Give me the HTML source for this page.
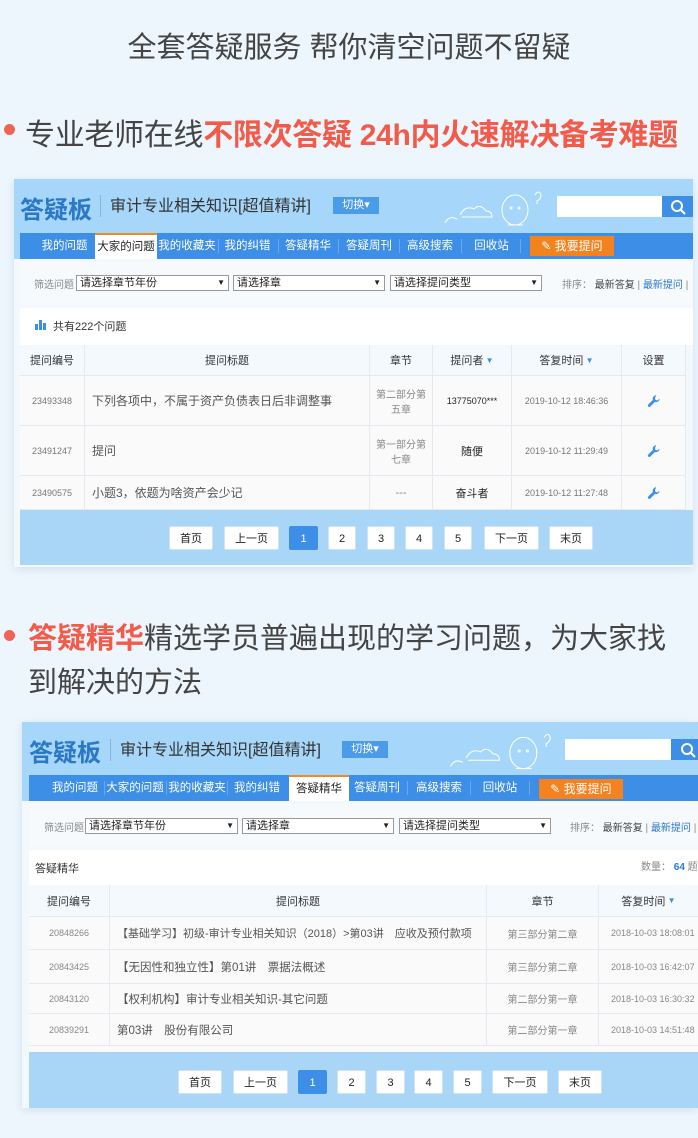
<!DOCTYPE html>
<html><head><meta charset="utf-8">
<style>
*{margin:0;padding:0;box-sizing:border-box}
body{width:698px;height:1138px;background:#eef6fd;position:relative;overflow:hidden;font-family:"Liberation Sans","Noto Sans CJK SC",sans-serif;color:#333}
.a{position:absolute;white-space:nowrap}
.hdr{background:#a6d6f9}
.nav{background:#3d8ee6}
.tab{position:absolute;top:0;height:26px;line-height:26px;color:#fff;font-size:11.5px;text-align:center}
.tab.on{background:#fff;color:#222;border-top:2px solid #f28a24;line-height:24px}
.sep{position:absolute;top:6px;width:1px;height:14px;background:#6aa7ec}
.ask{position:absolute;top:3px;height:20px;line-height:20px;background:#f4821f;color:#fff;font-size:12px;text-align:center}
.sel{position:absolute;height:16px;border:1px solid #999;background:#fff;font-size:11px;line-height:14px;padding-left:3px;color:#222}
.sel:after{content:"▼";position:absolute;right:3px;top:0;font-size:8px}
.small{font-size:10px;color:#888}
.cell{position:absolute;border-right:1px solid #e4eaf0;border-bottom:1px solid #e4eaf0;font-size:11px;display:flex;align-items:center;justify-content:center;text-align:center;color:#555;white-space:nowrap;overflow:hidden}
.th{background:#f4f9fd;color:#333;font-size:11px}
.pg{position:absolute;height:24px;line-height:24px;background:#fff;border:1px solid #cfe3f5;font-size:11px;text-align:center;color:#222;border-radius:2px}
.pg.on{background:#3d8ee6;color:#fff;border-color:#3d8ee6}
.logo{font-size:24px;font-weight:bold;color:#2b78c6}
.w{width:14px;height:14px}
</style></head><body>
<svg width="0" height="0" style="position:absolute"><defs><symbol id="wr" viewBox="0 0 16 16"><path d="M10.5 1.5a4 4 0 0 0-3.8 5.3L1.5 12a1.6 1.6 0 0 0 2.3 2.3l5.2-5.2a4 4 0 0 0 5.3-3.8l-2.4 2.1-2.2-.6-.6-2.2z" fill="#3d8ee6"/></symbol></defs></svg>

<div class="a" style="left:0;top:24px;width:698px;text-align:center;font-size:29px;color:#444">全套答疑服务 帮你清空问题不留疑</div>

<div class="a" style="left:4px;top:124px;width:11px;height:11px;border-radius:50%;background:#f06455"></div>
<div class="a" style="left:25px;top:110px;font-size:30px;color:#444;letter-spacing:-0.3px">专业老师在线<span style="color:#f25a4a;font-weight:bold">不限次答疑 24h内火速解决备考难题</span></div>

<!-- Screenshot 1 -->
<div class="a" style="left:14px;top:179px;width:679px;height:388px;background:#f3f8fd;box-shadow:0 2px 8px rgba(120,160,200,.25)"></div>
<div class="a hdr" style="left:14px;top:179px;width:679px;height:80px"></div>
<div class="a logo" style="left:20px;top:190px">答疑板</div>
<div class="a" style="left:100px;top:195px;width:1px;height:22px;background:#7fb4dd"></div>
<div class="a" style="left:110px;top:192px;font-size:16px;color:#333">审计专业相关知识[超值精讲]</div>
<div class="a" style="left:333px;top:197px;width:46px;height:17px;background:#4a9be8;color:#fff;font-size:11px;line-height:17px;text-align:center">切换▾</div>
<svg class="a" style="left:440px;top:185px" width="110" height="50" viewBox="0 0 110 50" fill="none" stroke="#fff" stroke-width="1"><path d="M5 38 q4-8 12-4 M20 30 q5-10 14-6 q6-6 12 2 q6 0 6 6 h-30"/><ellipse cx="75" cy="25" rx="13" ry="15"/><circle cx="71" cy="23" r="1"/><circle cx="79" cy="23" r="1"/><path d="M68 40 h15 M95 10 q4-6 6 0 q0 4-4 6 v3"/></svg>
<div class="a" style="left:557px;top:196px;width:105px;height:21px;background:#fff"></div>
<div class="a" style="left:662px;top:196px;width:31px;height:21px;background:#3d8ee6"></div>
<svg class="a" style="left:670px;top:199px" width="16" height="16" viewBox="0 0 16 16" fill="none" stroke="#fff" stroke-width="2"><circle cx="7" cy="7" r="5"/><path d="M11 11l4 4"/></svg>
<div class="a nav" style="left:20px;top:233px;width:673px;height:26px">
<div class="tab" style="left:17px;width:55px">我的问题</div>
<div class="tab on" style="left:75px;width:62px">大家的问题</div>
<div class="tab" style="left:137px;width:60px">我的收藏夹</div><div class="sep" style="left:198px"></div>
<div class="tab" style="left:200px;width:55px">我的纠错</div><div class="sep" style="left:258px"></div>
<div class="tab" style="left:260px;width:56px">答疑精华</div><div class="sep" style="left:318px"></div>
<div class="tab" style="left:320px;width:58px">答疑周刊</div><div class="sep" style="left:379px"></div>
<div class="tab" style="left:380px;width:60px">高级搜索</div><div class="sep" style="left:441px"></div>
<div class="tab" style="left:445px;width:53px">回收站</div><div class="sep" style="left:500px"></div>
<div class="ask" style="left:510px;width:84px">✎ 我要提问</div>
</div>
<div class="a" style="left:20px;top:262px;width:673px;height:43px;background:#f7fafd"></div>
<div class="a small" style="left:34px;top:276px">筛选问题</div>
<div class="sel" style="left:76px;top:275px;width:153px">请选择章节年份</div>
<div class="sel" style="left:233px;top:275px;width:152px">请选择章</div>
<div class="sel" style="left:390px;top:275px;width:152px">请选择提问类型</div>
<div class="a" style="left:562px;top:276px;font-size:10px;color:#888">排序： <span style="color:#444">最新答复</span> | <span style="color:#2b78c6">最新提问</span> |</div>
<div class="a" style="left:20px;top:308px;width:673px;height:37px;background:#fff"></div>
<svg class="a" style="left:35px;top:318px" width="12" height="12"><rect x="0" y="6" width="3" height="6" fill="#3d8ee6"/><rect x="4" y="2" width="3" height="10" fill="#3d8ee6"/><rect x="8" y="5" width="3" height="7" fill="#3d8ee6"/></svg>
<div class="a" style="left:53px;top:318px;font-size:11px;color:#333">共有222个问题</div>
<!-- table1 -->
<div class="cell th" style="left:20px;top:345px;width:65px;height:31px">提问编号</div>
<div class="cell th" style="left:85px;top:345px;width:285px;height:31px">提问标题</div>
<div class="cell th" style="left:370px;top:345px;width:63px;height:31px">章节</div>
<div class="cell th" style="left:433px;top:345px;width:79px;height:31px">提问者<span style="color:#3d8ee6;font-size:8px">&nbsp;▼</span></div>
<div class="cell th" style="left:512px;top:345px;width:110px;height:31px">答复时间<span style="color:#3d8ee6;font-size:8px">&nbsp;▼</span></div>
<div class="cell th" style="left:622px;top:345px;width:64px;height:31px">设置</div>

<div class="cell" style="left:20px;top:376px;width:65px;height:50px;background:#fafafa;font-size:9px;color:#777">23493348</div>
<div class="cell" style="left:85px;top:376px;width:285px;height:50px;background:#fafafa;justify-content:flex-start;padding-left:7px;font-size:12px">下列各项中，不属于资产负债表日后非调整事</div>
<div class="cell" style="left:370px;top:376px;width:63px;height:50px;background:#fafafa;font-size:10px;color:#888;padding:0 6px;white-space:normal">第二部分第五章</div>
<div class="cell" style="left:433px;top:376px;width:79px;height:50px;background:#fafafa;font-size:9px;color:#222">13775070***</div>
<div class="cell" style="left:512px;top:376px;width:110px;height:50px;background:#fafafa;font-size:9px;color:#777">2019-10-12 18:46:36</div>
<div class="cell" style="left:622px;top:376px;width:64px;height:50px;background:#fafafa"><svg class="w"><use href="#wr"/></svg></div>

<div class="cell" style="left:20px;top:426px;width:65px;height:50px;background:#fafafa;font-size:9px;color:#777">23491247</div>
<div class="cell" style="left:85px;top:426px;width:285px;height:50px;background:#fafafa;justify-content:flex-start;padding-left:7px;font-size:12px">提问</div>
<div class="cell" style="left:370px;top:426px;width:63px;height:50px;background:#fafafa;font-size:10px;color:#888;padding:0 6px;white-space:normal">第一部分第七章</div>
<div class="cell" style="left:433px;top:426px;width:79px;height:50px;background:#fafafa;font-size:11px;color:#222">随便</div>
<div class="cell" style="left:512px;top:426px;width:110px;height:50px;background:#fafafa;font-size:9px;color:#777">2019-10-12 11:29:49</div>
<div class="cell" style="left:622px;top:426px;width:64px;height:50px;background:#fafafa"><svg class="w"><use href="#wr"/></svg></div>

<div class="cell" style="left:20px;top:476px;width:65px;height:34px;background:#fafafa;font-size:9px;color:#777">23490575</div>
<div class="cell" style="left:85px;top:476px;width:285px;height:34px;background:#fafafa;justify-content:flex-start;padding-left:7px;font-size:12px">小题3，依题为啥资产会少记</div>
<div class="cell" style="left:370px;top:476px;width:63px;height:34px;background:#fafafa;color:#888">---</div>
<div class="cell" style="left:433px;top:476px;width:79px;height:34px;background:#fafafa;font-size:11px;color:#222">奋斗者</div>
<div class="cell" style="left:512px;top:476px;width:110px;height:34px;background:#fafafa;font-size:9px;color:#777">2019-10-12 11:27:48</div>
<div class="cell" style="left:622px;top:476px;width:64px;height:34px;background:#fafafa"><svg class="w"><use href="#wr"/></svg></div>

<div class="a" style="left:20px;top:510px;width:673px;height:55px;background:#a9d5f6"></div>
<div class="pg" style="left:169px;top:526px;width:44px">首页</div>
<div class="pg" style="left:224px;top:526px;width:55px">上一页</div>
<div class="pg on" style="left:289px;top:526px;width:29px">1</div>
<div class="pg" style="left:328px;top:526px;width:28px">2</div>
<div class="pg" style="left:367px;top:526px;width:28px">3</div>
<div class="pg" style="left:405px;top:526px;width:28px">4</div>
<div class="pg" style="left:444px;top:526px;width:28px">5</div>
<div class="pg" style="left:484px;top:526px;width:55px">下一页</div>
<div class="pg" style="left:549px;top:526px;width:44px">末页</div>

<!-- section 2 text -->
<div class="a" style="left:4px;top:630px;width:11px;height:11px;border-radius:50%;background:#f06455"></div>
<div class="a" style="left:28px;top:617px;font-size:29px;color:#444;line-height:44px;white-space:normal;width:670px"><span style="color:#f25a4a;font-weight:bold">答疑精华</span>精选学员普遍出现的学习问题，为大家找<br>到解决的方法</div>

<!-- Screenshot 2 -->
<div class="a" style="left:22px;top:722px;width:676px;height:386px;background:#f3f8fd;box-shadow:0 2px 8px rgba(120,160,200,.25)"></div>
<div class="a hdr" style="left:22px;top:722px;width:676px;height:79px"></div>
<div class="a logo" style="left:29px;top:733px">答疑板</div>
<div class="a" style="left:110px;top:739px;width:1px;height:22px;background:#7fb4dd"></div>
<div class="a" style="left:120px;top:736px;font-size:16px;color:#333">审计专业相关知识[超值精讲]</div>
<div class="a" style="left:342px;top:741px;width:46px;height:17px;background:#4a9be8;color:#fff;font-size:11px;line-height:17px;text-align:center">切换▾</div>
<svg class="a" style="left:445px;top:727px" width="115" height="52" viewBox="0 0 110 50" fill="none" stroke="#fff" stroke-width="1"><path d="M5 38 q4-8 12-4 M20 30 q5-10 14-6 q6-6 12 2 q6 0 6 6 h-30"/><ellipse cx="75" cy="25" rx="13" ry="15"/><circle cx="71" cy="23" r="1"/><circle cx="79" cy="23" r="1"/><path d="M68 40 h15 M95 10 q4-6 6 0 q0 4-4 6 v3"/></svg>
<div class="a" style="left:565px;top:739px;width:106px;height:21px;background:#fff"></div>
<div class="a" style="left:671px;top:739px;width:27px;height:21px;background:#3d8ee6"></div>
<svg class="a" style="left:680px;top:742px" width="16" height="16" viewBox="0 0 16 16" fill="none" stroke="#fff" stroke-width="2"><circle cx="7" cy="7" r="5"/><path d="M11 11l4 4"/></svg>
<div class="a nav" style="left:29px;top:775px;width:669px;height:26px">
<div class="tab" style="left:21px;width:50px">我的问题</div><div class="sep" style="left:75px"></div>
<div class="tab" style="left:76px;width:60px">大家的问题</div><div class="sep" style="left:137px"></div>
<div class="tab" style="left:138px;width:60px">我的收藏夹</div><div class="sep" style="left:198px"></div>
<div class="tab" style="left:200px;width:56px">我的纠错</div>
<div class="tab on" style="left:260px;width:60px">答疑精华</div>
<div class="tab" style="left:321px;width:54px">答疑周刊</div><div class="sep" style="left:378px"></div>
<div class="tab" style="left:380px;width:60px">高级搜索</div><div class="sep" style="left:441px"></div>
<div class="tab" style="left:445px;width:52px">回收站</div><div class="sep" style="left:500px"></div>
<div class="ask" style="left:510px;top:4px;width:84px">✎ 我要提问</div>
</div>
<div class="a" style="left:29px;top:804px;width:669px;height:43px;background:#f7fafd"></div>
<div class="a small" style="left:44px;top:819px">筛选问题</div>
<div class="sel" style="left:85px;top:818px;width:153px">请选择章节年份</div>
<div class="sel" style="left:242px;top:818px;width:152px">请选择章</div>
<div class="sel" style="left:399px;top:818px;width:152px">请选择提问类型</div>
<div class="a" style="left:570px;top:819px;font-size:10px;color:#888">排序： <span style="color:#444">最新答复</span> | <span style="color:#2b78c6">最新提问</span> |</div>
<div class="a" style="left:29px;top:850px;width:669px;height:35px;background:#fff"></div>
<div class="a" style="left:35px;top:860px;font-size:11px;color:#333">答疑精华</div>
<div class="a" style="left:641px;top:858px;font-size:10px;color:#888">数量： <b style="color:#2b78c6">64</b> 题</div>
<div class="cell th" style="left:29px;top:885px;width:81px;height:32px">提问编号</div>
<div class="cell th" style="left:110px;top:885px;width:377px;height:32px">提问标题</div>
<div class="cell th" style="left:487px;top:885px;width:112px;height:32px">章节</div>
<div class="cell th" style="left:599px;top:885px;width:99px;height:32px;border-right:0">答复时间<span style="color:#3d8ee6;font-size:8px">&nbsp;▼</span></div>

<div class="cell" style="left:29px;top:917px;width:81px;height:33px;background:#fafafa;font-size:9px;color:#888">20848266</div>
<div class="cell" style="left:110px;top:917px;width:377px;height:33px;background:#fafafa;justify-content:flex-start;padding-left:7px;font-size:11px">【基础学习】初级-审计专业相关知识（2018）>第03讲　应收及预付款项</div>
<div class="cell" style="left:487px;top:917px;width:112px;height:33px;background:#fafafa;font-size:10px;color:#888">第三部分第二章</div>
<div class="cell" style="left:599px;top:917px;width:99px;height:33px;background:#fafafa;font-size:9px;color:#888;justify-content:flex-start;padding-left:12px;border-right:0">2018-10-03 18:08:01</div>

<div class="cell" style="left:29px;top:950px;width:81px;height:34px;background:#fafafa;font-size:9px;color:#888">20843425</div>
<div class="cell" style="left:110px;top:950px;width:377px;height:34px;background:#fafafa;justify-content:flex-start;padding-left:7px;font-size:11.5px">【无因性和独立性】第01讲　票据法概述</div>
<div class="cell" style="left:487px;top:950px;width:112px;height:34px;background:#fafafa;font-size:10px;color:#888">第三部分第二章</div>
<div class="cell" style="left:599px;top:950px;width:99px;height:34px;background:#fafafa;font-size:9px;color:#888;justify-content:flex-start;padding-left:12px;border-right:0">2018-10-03 16:42:07</div>

<div class="cell" style="left:29px;top:984px;width:81px;height:30px;background:#fafafa;font-size:9px;color:#888">20843120</div>
<div class="cell" style="left:110px;top:984px;width:377px;height:30px;background:#fafafa;justify-content:flex-start;padding-left:7px;font-size:11.5px">【权利机构】审计专业相关知识-其它问题</div>
<div class="cell" style="left:487px;top:984px;width:112px;height:30px;background:#fafafa;font-size:10px;color:#888">第二部分第一章</div>
<div class="cell" style="left:599px;top:984px;width:99px;height:30px;background:#fafafa;font-size:9px;color:#888;justify-content:flex-start;padding-left:12px;border-right:0">2018-10-03 16:30:32</div>

<div class="cell" style="left:29px;top:1014px;width:81px;height:32px;background:#fafafa;font-size:9px;color:#888">20839291</div>
<div class="cell" style="left:110px;top:1014px;width:377px;height:32px;background:#fafafa;justify-content:flex-start;padding-left:7px;font-size:11.5px">第03讲　股份有限公司</div>
<div class="cell" style="left:487px;top:1014px;width:112px;height:32px;background:#fafafa;font-size:10px;color:#888">第二部分第一章</div>
<div class="cell" style="left:599px;top:1014px;width:99px;height:32px;background:#fafafa;font-size:9px;color:#888;justify-content:flex-start;padding-left:12px;border-right:0">2018-10-03 14:51:48</div>
<div class="a" style="left:29px;top:1046px;width:669px;height:6px;background:#fafafa"></div>

<div class="a" style="left:29px;top:1052px;width:669px;height:56px;background:#a9d5f6"></div>
<div class="pg" style="left:178px;top:1070px;width:44px">首页</div>
<div class="pg" style="left:233px;top:1070px;width:55px">上一页</div>
<div class="pg on" style="left:298px;top:1070px;width:29px">1</div>
<div class="pg" style="left:337px;top:1070px;width:29px">2</div>
<div class="pg" style="left:376px;top:1070px;width:29px">3</div>
<div class="pg" style="left:414px;top:1070px;width:29px">4</div>
<div class="pg" style="left:453px;top:1070px;width:29px">5</div>
<div class="pg" style="left:492px;top:1070px;width:56px">下一页</div>
<div class="pg" style="left:558px;top:1070px;width:44px">末页</div>
</body></html>
